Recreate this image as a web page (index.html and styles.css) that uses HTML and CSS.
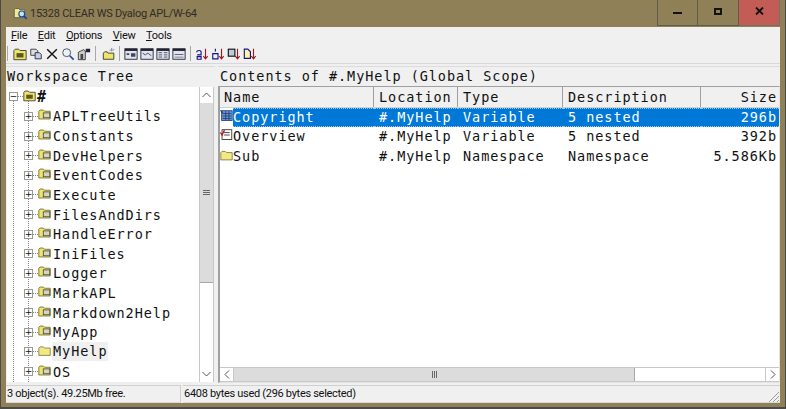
FILE: index.html
```html
<!DOCTYPE html>
<html lang="en">
<head>
    <meta charset="UTF-8">
    <title>15328 CLEAR WS Dyalog APL/W-64</title>
    <link rel="stylesheet" href="styles.css">
</head>
<body>

<!-- Shared icons -->
<svg class="defs" width="0" height="0">
    <symbol id="ns" viewBox="0 0 16 16">
        <path d="M1 13.500V4l1.500-1.500h4L8 4h7v9.500z" fill="#efe56c" stroke="#6a6420"/>
        <rect x="6.500" y="6" width="8" height="6" fill="#d4d4c4" stroke="#444"/>
    </symbol>
    <symbol id="folder" viewBox="0 0 16 16">
        <path d="M1 14V5l1.500-1.500h4L8 5h7v9z" fill="#f2ea80" stroke="#7a7440"/>
    </symbol>
    <symbol id="mini" viewBox="0 0 16 16">
        <path d="M1 14.500V4l1.500-1.500h4L8 4h7v10.500z" fill="#efe36a" stroke="#333"/>
        <rect x="4" y="7" width="8" height="5" fill="#5a5a20"/>
    </symbol>
    <symbol id="sheet" viewBox="0 0 16 16">
        <rect x="1.500" y="2.500" width="13" height="11" fill="#b8c4d8" stroke="#223"/>
        <path d="M3 6h10M3 9h10M6 3v10" stroke="#223"/>
    </symbol>
    <symbol id="sort" viewBox="0 0 16 16">
        <path d="M12 2v11M9.500 10.500L12 13.500l2.500-3" fill="none" stroke="#a01818" stroke-width="1.300"/>
    </symbol>
</svg>

<div class="window">
    <header class="titlebar">
        <svg class="app-icon" width="15" height="15" viewBox="0 0 18 18">
            <path d="M1.500 14V4.500L3 3h4l1 1.500h6V14z" fill="#f4e98a" stroke="#555"/>
            <circle cx="10.500" cy="9.500" r="3.500" fill="#bfe3f2" stroke="#1d4f9c" stroke-width="1.400"/>
            <path d="M13 12l3.500 3.500" stroke="#1d3f8c" stroke-width="2"/>
        </svg>
        <span class="title">15328 CLEAR WS Dyalog APL/W-64</span>
        <div class="controls">
            <div class="control"><span class="min"></span></div>
            <div class="control"><span class="max"></span></div>
            <div class="control close">
                <svg width="9" height="8" viewBox="0 0 9 8"><path d="M1 .5l7 7M8 .5l-7 7" stroke="#111" stroke-width="1.800"/></svg>
            </div>
        </div>
    </header>

    <div class="client">
        <nav class="menubar">
            <span><u>F</u>ile</span>
            <span><u>E</u>dit</span>
            <span><u>O</u>ptions</span>
            <span><u>V</u>iew</span>
            <span><u>T</u>ools</span>
        </nav>

        <div class="toolbar">
            <i class="grip"></i>
            <svg class="tool" viewBox="0 0 16 16"><use href="#mini"/></svg>
            <svg class="tool" viewBox="0 0 16 16"><path d="M2 2.500h6l2 2v5H2z" fill="#ddd" stroke="#334"/><path d="M7 6.500h5l2 2v5H7z" fill="#c8d0e8" stroke="#223"/></svg>
            <svg class="tool" viewBox="0 0 16 16"><path d="M2.500 2.500l11 11M13.500 2.500l-11 11" stroke="#111" stroke-width="1.600"/></svg>
            <svg class="tool" viewBox="0 0 16 16"><circle cx="6.500" cy="6.500" r="4.500" fill="#e8f2f8" stroke="#445"/><path d="M10 10l4.500 4.500" stroke="#1d4f9c" stroke-width="2"/></svg>
            <svg class="tool" viewBox="0 0 16 16"><path d="M1.500 14.500V6l6-3 2 1.500v10z" fill="#ccc" stroke="#333"/><rect x="4" y="8" width="3" height="6" fill="#444"/><rect x="10" y="2" width="5" height="4" fill="#223" /></svg>
            <i class="sep"></i>
            <svg class="tool wide" viewBox="0 0 16 16"><path d="M1.500 14V7L3 5.500h3L7 7h6.500v7z" fill="#efe36a" stroke="#333"/><path d="M11 1v4M8.500 3.500h5M13 2l1 1" stroke="#889" /></svg>
            <i class="sep"></i>
            <svg class="tool" viewBox="0 0 16 16"><rect x="1" y="2" width="14" height="12" fill="#dfe4ee" stroke="#223"/><rect x="1" y="2" width="14" height="2.500" fill="#223"/><path d="M3 7h3v2H3zM8 7h5v4H8z" fill="#445"/></svg>
            <svg class="tool" viewBox="0 0 16 16"><rect x="1" y="2" width="14" height="12" fill="#dfe4ee" stroke="#223"/><rect x="1" y="2" width="14" height="2.500" fill="#223"/><path d="M3 7l3 2 3-2 4 3" fill="none" stroke="#445"/></svg>
            <svg class="tool" viewBox="0 0 16 16"><rect x="1" y="2" width="14" height="12" fill="#dfe4ee" stroke="#223"/><rect x="1" y="2" width="14" height="2.500" fill="#223"/><path d="M3 6.500h4M3 9h4M3 11.500h4M9 6.500h4M9 9h4M9 11.500h4" stroke="#445"/></svg>
            <svg class="tool" viewBox="0 0 16 16"><rect x="1" y="2" width="14" height="12" fill="#dfe4ee" stroke="#223"/><rect x="1" y="2" width="14" height="2.500" fill="#223"/><path d="M3 8h10v1H3zM3 11h10v1H3z" fill="#667"/></svg>
            <i class="sep"></i>
            <svg class="tool" viewBox="0 0 16 16"><use href="#sort"/><path d="M2 6a2.500 2 0 1 1 5 0v3H2.500M2.500 11h4.500v3H2.500z" fill="none" stroke="#14148c" stroke-width="1.300"/></svg>
            <svg class="tool" viewBox="0 0 16 16"><use href="#sort"/><path d="M2 7.500h6v6H2zM5 2v3" fill="none" stroke="#14148c" stroke-width="1.300"/></svg>
            <svg class="tool" viewBox="0 0 16 16"><use href="#sort"/><rect x="1.500" y="2.500" width="7.500" height="8" fill="#bcd" stroke="#111" stroke-width="1.300"/></svg>
            <svg class="tool" viewBox="0 0 16 16"><use href="#sort"/><path d="M1.500 13V2.500h4l3 3V13z" fill="#fdf6a0" stroke="#14148c" stroke-width="1.300"/></svg>
        </div>

        <div class="panes">
            <section class="tree-pane">
                <h2 class="pane-title">Workspace Tree</h2>
                <div class="tree-box">
                    <div class="tree">
                        <i class="guide guide-root"></i>
                        <i class="guide guide-kids"></i>
                        <div class="tree-row root"><span class="exp">−</span><i class="dash"></i><svg class="node"><use href="#mini"/></svg><span class="label">#</span></div>
                        <div class="tree-row"><span class="exp">+</span><i class="dash"></i><svg class="node"><use href="#ns"/></svg><span class="label">APLTreeUtils</span></div>
                        <div class="tree-row"><span class="exp">+</span><i class="dash"></i><svg class="node"><use href="#ns"/></svg><span class="label">Constants</span></div>
                        <div class="tree-row"><span class="exp">+</span><i class="dash"></i><svg class="node"><use href="#ns"/></svg><span class="label">DevHelpers</span></div>
                        <div class="tree-row"><span class="exp">+</span><i class="dash"></i><svg class="node"><use href="#ns"/></svg><span class="label">EventCodes</span></div>
                        <div class="tree-row"><span class="exp">+</span><i class="dash"></i><svg class="node"><use href="#ns"/></svg><span class="label">Execute</span></div>
                        <div class="tree-row"><span class="exp">+</span><i class="dash"></i><svg class="node"><use href="#ns"/></svg><span class="label">FilesAndDirs</span></div>
                        <div class="tree-row"><span class="exp">+</span><i class="dash"></i><svg class="node"><use href="#ns"/></svg><span class="label">HandleError</span></div>
                        <div class="tree-row"><span class="exp">+</span><i class="dash"></i><svg class="node"><use href="#ns"/></svg><span class="label">IniFiles</span></div>
                        <div class="tree-row"><span class="exp">+</span><i class="dash"></i><svg class="node"><use href="#ns"/></svg><span class="label">Logger</span></div>
                        <div class="tree-row"><span class="exp">+</span><i class="dash"></i><svg class="node"><use href="#ns"/></svg><span class="label">MarkAPL</span></div>
                        <div class="tree-row"><span class="exp">+</span><i class="dash"></i><svg class="node"><use href="#ns"/></svg><span class="label">Markdown2Help</span></div>
                        <div class="tree-row"><span class="exp">+</span><i class="dash"></i><svg class="node"><use href="#ns"/></svg><span class="label">MyApp</span></div>
                        <div class="tree-row"><span class="exp">+</span><i class="dash"></i><svg class="node"><use href="#folder"/></svg><span class="label current">MyHelp</span></div>
                        <div class="tree-row"><span class="exp">+</span><i class="dash"></i><svg class="node"><use href="#ns"/></svg><span class="label">OS</span></div>
                    </div>
                    <div class="vscroll">
                        <div class="sb-btn"><svg width="9" height="6" viewBox="0 0 9 6"><path d="M.5 5l4-4 4 4" fill="none" stroke="#555"/></svg></div>
                        <div class="vthumb"><i></i><i></i><i></i></div>
                        <div class="sb-track"></div>
                        <div class="sb-btn"><svg width="9" height="6" viewBox="0 0 9 6"><path d="M.5 1l4 4 4-4" fill="none" stroke="#555"/></svg></div>
                    </div>
                </div>
            </section>

            <section class="list-pane">
                <h2 class="pane-title">Contents of #.MyHelp (Global Scope)</h2>
                <div class="list-box">
                    <div class="list-head cols">
                        <span>Name</span>
                        <span>Location</span>
                        <span>Type</span>
                        <span>Description</span>
                        <span class="num">Size</span>
                    </div>
                    <div class="list-body">
                        <div class="cols row selected">
                            <span class="name">
                                <svg class="item" viewBox="0 0 16 16"><rect x="2" y="1.500" width="13" height="12" fill="#6f94d0" stroke="#1c3c78"/><path d="M3 5h11M3 8h11M3 11h11M7 2v11M11 2v11" stroke="#1c3c78"/><path d="M.5 1l3 3" stroke="#1c3c78" stroke-width="1.500"/></svg><b>Copyright</b>
                            </span>
                            <span>#.MyHelp</span><span>Variable</span><span>5 nested</span><span class="num">296b</span>
                        </div>
                        <div class="cols row">
                            <span class="name">
                                <svg class="item" viewBox="0 0 16 16"><rect x="2.500" y="1.500" width="12" height="12" fill="#fff" stroke="#222"/><path d="M5 5h7M5 8h7" stroke="#222"/><path d="M.5 5l2 3 3-6" fill="none" stroke="#b01010" stroke-width="1.500"/></svg><b>Overview</b>
                            </span>
                            <span>#.MyHelp</span><span>Variable</span><span>5 nested</span><span class="num">392b</span>
                        </div>
                        <div class="cols row">
                            <span class="name"><svg class="item" viewBox="0 0 16 16"><use href="#folder"/></svg><b>Sub</b></span>
                            <span>#.MyHelp</span><span>Namespace</span><span>Namespace</span><span class="num">5.586Kb</span>
                        </div>
                    </div>
                    <div class="hscroll">
                        <div class="sb-btn"><svg width="6" height="9" viewBox="0 0 6 9"><path d="M5 .5l-4 4 4 4" fill="none" stroke="#555"/></svg></div>
                        <div class="hthumb"><i></i><i></i><i></i></div>
                        <div class="sb-track"></div>
                        <div class="sb-btn"><svg width="6" height="9" viewBox="0 0 6 9"><path d="M1 .5l4 4-4 4" fill="none" stroke="#555"/></svg></div>
                    </div>
                </div>
            </section>
        </div>

        <footer class="statusbar">
            <div class="status left">3 object(s). 49.25Mb free.</div>
            <div class="status right">6408 bytes used (296 bytes selected)</div>
            <svg class="resize" width="12" height="12" viewBox="0 0 12 12"><path d="M11 1L1 11M11 5l-6 6M11 9l-2 2" stroke="#999"/></svg>
        </footer>
    </div>
</div>

</body>
</html>
```

FILE: styles.css
```css
/* Reset CSS */
* {
    box-sizing: border-box;
    margin: 0;
    padding: 0;
}

body {
    width: 786px;
    height: 409px;
    overflow: hidden;
    font-family: Roboto, Arial, sans-serif;
    font-size: 11px;
    letter-spacing: -0.250px;
    color: #111;
    background: #8f8058;
}

.defs {
    position: absolute;
}

.window {
    display: flex;
    flex-direction: column;
    width: 786px;
    height: 409px;
    border: 1px solid #4a4a48;
    border-top: 0;
    border-bottom-width: 2px;
    background: #8f8058;
    padding: 0 5px 4px 5px;
}

/* Title bar */
.titlebar {
    display: flex;
    align-items: center;
    height: 27px;
    flex: none;
}

.app-icon {
    margin: -1px 2px 0 7px;
}

.title {
    flex: 1;
    color: #2f2c22;
    margin-top: -1px;
}

.controls {
    display: flex;
    align-self: flex-start;
    height: 26px;
}

.control {
    display: flex;
    align-items: center;
    justify-content: center;
    width: 41px;
    border: 1px solid #5e5a4c;
    border-top: 0;
    border-left-width: 0;
    padding-bottom: 3px;
}

.control:first-child {
    border-left-width: 1px;
}

.close {
    background: #c25c54;
    border-color: #77706a;
}

.min {
    display: block;
    width: 9px;
    height: 2px;
    margin-top: 4px;
    background: #111;
}

.max {
    display: block;
    width: 8px;
    height: 7px;
    border: 2px solid #111;
}

.client {
    display: flex;
    flex-direction: column;
    flex: 1;
    min-height: 0;
    background: #f0f0f0;
}

/* Menu and toolbar */
.menubar {
    display: flex;
    gap: 10.500px;
    height: 17px;
    flex: none;
    padding-left: 5px;
    align-items: center;
    background: #f0f0f0;
}

.toolbar {
    display: flex;
    align-items: center;
    height: 20px;
    flex: none;
    padding-left: 1px;
    border-bottom: 1px solid #d8d8d8;
}

.grip,
.sep {
    display: block;
    width: 1px;
    height: 15px;
    background: #a8a8a8;
}

.grip {
    margin-right: 4px;
}

.sep {
    margin: 0 3px;
}

.tool {
    width: 14px;
    height: 14px;
    margin: 0 1px;
}

.tool.wide {
    margin-left: 3px;
    margin-right: 0;
}

/* Panes */
.panes {
    display: flex;
    flex: 1;
    min-height: 0;
    padding-top: 2px;
    gap: 3px;
}

.tree-pane {
    width: 209px;
    display: flex;
    flex-direction: column;
    flex: none;
}

.list-pane {
    flex: 1;
    display: flex;
    flex-direction: column;
    min-width: 0;
}

.pane-title {
    flex: none;
    height: 20px;
    padding: 0 0 0 1px;
    font-family: 'DejaVu Sans Mono', monospace;
    font-size: 13.500px;
    line-height: 18px;
    font-weight: normal;
    letter-spacing: 0.950px;
    white-space: nowrap;
    border-top: 1px solid #dcdcdc;
}

.list-pane .pane-title {
    padding-left: 2px;
}

.tree-box,
.list-box {
    flex: 1;
    min-height: 0;
    background: #fff;
    font-family: 'DejaVu Sans Mono', monospace;
    font-size: 13.500px;
    letter-spacing: 0.950px;
}

.tree-box {
    display: flex;
    border: 1px solid #f0f0f0;
}

.tree {
    position: relative;
    flex: 1;
    overflow: hidden;
}

/* Dotted tree guide lines */
.guide {
    position: absolute;
    top: 12px;
    width: 0;
    bottom: 0;
    border-left: 1px dotted #888;
}

.guide-root {
    left: 6px;
}

.guide-kids {
    left: 21px;
}

.tree-row {
    position: relative;
    display: flex;
    align-items: center;
    height: 19.640px;
    padding-left: 17px;
    white-space: nowrap;
}

.tree-row.root {
    padding-left: 2px;
}

.exp {
    display: flex;
    align-items: center;
    justify-content: center;
    width: 9px;
    height: 9px;
    background: #fff;
    border: 1px solid #999;
    font-family: 'DejaVu Sans', sans-serif;
    font-size: 9px;
    line-height: 1;
    letter-spacing: 0;
    color: #111;
    flex: none;
}

.dash {
    display: block;
    width: 5px;
    border-top: 1px dotted #888;
    flex: none;
}

.node {
    width: 13px;
    height: 13px;
    flex: none;
    margin-right: 1px;
    margin-top: -3px;
}

.root .node {
    margin-right: 0;
}

.label {
    padding: 0 1px;
}

.current {
    background: #f0f0f0;
    line-height: 19px;
}

.root .label {
    font-weight: bold;
    font-size: 15px;
}

/* Scrollbars */
.vscroll {
    display: flex;
    flex-direction: column;
    width: 15px;
    flex: none;
    border: 1px solid #c8c8c8;
    border-width: 0 1px;
}

.sb-btn {
    display: flex;
    align-items: center;
    justify-content: center;
    flex: none;
    width: 100%;
    height: 16px;
    background: #fff;
}

.sb-track {
    flex: 1;
    background: #fff;
}

.vthumb {
    display: flex;
    flex-direction: column;
    align-items: center;
    justify-content: center;
    gap: 1px;
    height: 180px;
    flex: none;
    background: #dcdcdc;
    border-bottom: 1px solid #a8a8a8;
}

.vthumb i {
    display: block;
    width: 7px;
    height: 1px;
    background: #666;
}

.list-box {
    display: flex;
    flex-direction: column;
    border: 1px solid #e4e4e4;
    border-left: 2px solid #a0a0a0;
    border-top: 1px solid #a0a0a0;
}

.cols {
    display: grid;
    grid-template-columns: 154px 84px 105px 138px 1fr;
    white-space: nowrap;
}

.list-head {
    flex: none;
    height: 21px;
    line-height: 20px;
    background: #f0f0f0;
    border-bottom: 1px solid #d0d0d0;
}

.list-head span {
    padding-left: 5px;
    border-right: 1px solid #a0a0a0;
}

.list-head span:first-child {
    padding-left: 4px;
}

.list-head .num {
    border-right: 0;
    padding-right: 2px;
}

.num {
    text-align: right;
}

.list-body {
    flex: 1;
    min-height: 0;
}

.row {
    height: 19.300px;
    line-height: 19px;
}

.row > span {
    padding-left: 5px;
}

.row > .name {
    display: flex;
    padding-left: 0;
}

.row > .num {
    padding-right: 2px;
}

.item {
    width: 13px;
    height: 14px;
    flex: none;
    margin-top: 1px;
}

.name b {
    flex: 1;
    font-weight: normal;
}

/* Selected row: blue band with a dotted focus edge, starts after the icon */
.row.selected {
    color: #fff;
    line-height: 17px;
}

.selected > span:not(.name),
.selected b {
    background: #0078d7;
    border-top: 1px dotted #9cc4e4;
    border-bottom: 1px dotted #9cc4e4;
}

.hscroll {
    display: flex;
    flex: none;
    height: 15px;
    border: 1px solid #c8c8c8;
    border-width: 1px 0;
}

.hscroll .sb-btn {
    width: 14px;
    height: 100%;
    border-right: 1px solid #c8c8c8;
}

.hscroll .sb-btn:last-child {
    border-right: 0;
    border-left: 1px solid #c8c8c8;
}

.hthumb {
    display: flex;
    align-items: center;
    justify-content: center;
    gap: 1px;
    width: 401px;
    flex: none;
    background: #dcdcdc;
    border-right: 1px solid #a8a8a8;
}

.hthumb i {
    display: block;
    width: 1px;
    height: 7px;
    background: #666;
}

/* Status bar */
.statusbar {
    position: relative;
    display: flex;
    flex: none;
    gap: 2px;
    height: 20px;
    padding-top: 2px;
    background: #f0f0f0;
}

.status {
    padding-left: 1px;
    letter-spacing: -0.300px;
    line-height: 16px;
    border-top: 1px solid #d0d0d0;
    border-bottom: 1px solid #d8d8d8;
    white-space: nowrap;
}

.status.left {
    width: 175px;
    border-right: 1px solid #d0d0d0;
}

.status.right {
    flex: 1;
}

.resize {
    position: absolute;
    right: 0;
    bottom: 0;
}
```
